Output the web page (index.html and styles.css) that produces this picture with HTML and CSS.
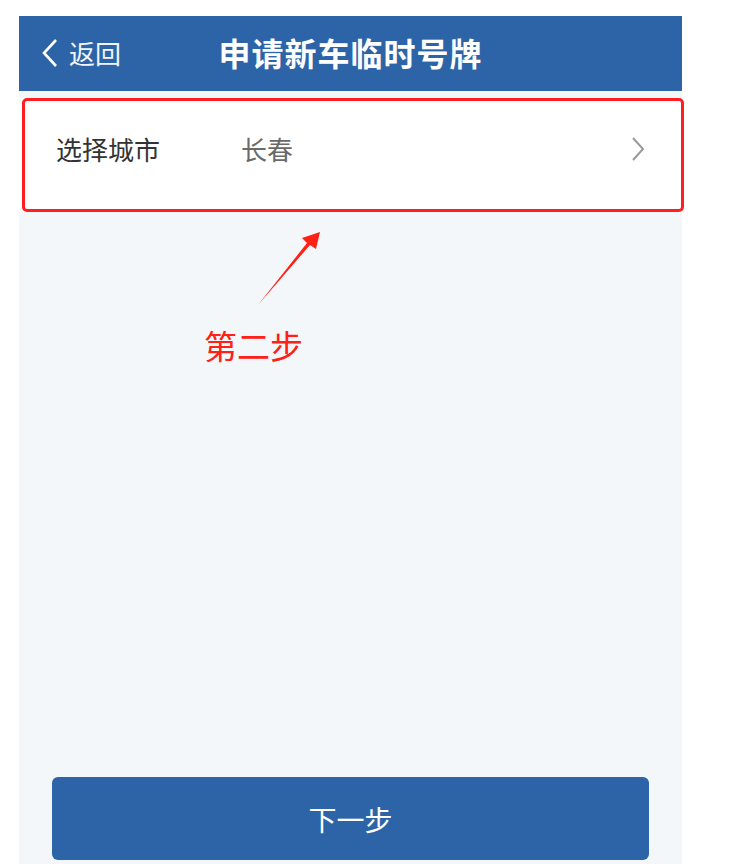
FILE: index.html
```html
<!DOCTYPE html>
<html lang="zh-CN">
<head>
<meta charset="utf-8">
<title>申请新车临时号牌</title>
<link rel="stylesheet" href="styles.css">
</head>
<body>
<div class="page">
  <div class="phone">
    <header class="topbar">
      <div class="back">
        <svg class="back-icon" width="18" height="30" viewBox="0 0 18 30"><polyline points="15,2 3,15 15,28" fill="none" stroke="#fff" stroke-width="2.6" stroke-linejoin="miter"/></svg>
        <span class="back-text">返回</span>
      </div>
      <h1 class="title">申请新车临时号牌</h1>
    </header>
    <div class="row">
      <span class="row-label">选择城市</span>
      <span class="row-value">长春</span>
      <svg class="row-arrow" width="16" height="26" viewBox="0 0 16 26"><polyline points="3,2 13,13 3,24" fill="none" stroke="#9a9a9a" stroke-width="2"/></svg>
    </div>
    <div class="spacer"></div>
    <button class="next">下一步</button>
    <svg class="note-arrow" width="663" height="400" viewBox="0 0 663 400"><polygon points="239,289 288,227 283,222 301,216 297,233 291,229" fill="#ff2016"/></svg>
    <div class="note-text">第二步</div>
  </div>
  <div class="side"></div>
</div>
</body>
</html>
```
FILE: styles.css
```css
* { box-sizing: border-box; }
html, body { margin: 0; padding: 0; background: #ffffff; }
body { font-family: "Noto Sans CJK SC", "Noto Sans", sans-serif; width: 729px; height: 867px; overflow: hidden; }
.page { display: flex; height: 867px; }
.phone {
  position: relative;
  margin: 16px 0 0 19px;
  width: 663px;
  height: 848px;
  background: #f4f7f9;
  display: flex;
  flex-direction: column;
}
.side { flex: 1; }
.topbar {
  height: 75px;
  background: #2d64a7;
  display: flex;
  align-items: center;
  position: relative;
  flex-shrink: 0;
  padding-bottom: 2px;
}
.back {
  display: flex;
  align-items: center;
  padding-left: 22px;
  gap: 10px;
  color: #fff;
}
.back-icon { display: block; }
.back-text { font-size: 26px; line-height: 1; color: #f2f5fa; }
.title {
  position: absolute;
  left: 0; right: 0; top: 0; bottom: 3px;
  margin: 0;
  display: flex;
  align-items: center;
  justify-content: center;
  font-size: 32px;
  font-weight: 700;
  color: #ffffff;
  letter-spacing: 1px;
  pointer-events: none;
}
.row {
  position: relative;
  margin-top: 7px;
  height: 114px;
  background: #ffffff;
  display: flex;
  align-items: center;
  padding-left: 37px;
  padding-bottom: 12px;
  flex-shrink: 0;
}
.row::after {
  content: "";
  position: absolute;
  left: 3px; right: -2px; top: 0; bottom: 0;
  border: 3px solid #ff1f1f;
  border-radius: 5px;
}
.row-label { font-size: 26px; color: #333; width: 185px; line-height: 1; }
.row-value { font-size: 26px; color: #6a6a6a; line-height: 1; }
.row-arrow { position: absolute; right: 36px; top: 38px; }
.spacer { flex: 1; }
.next {
  margin: 0 33px 4px 33px;
  height: 83px;
  border: none;
  border-radius: 6px;
  background: #2d64a7;
  color: #ffffff;
  font-family: "Noto Sans CJK SC", "Noto Sans", sans-serif;
  font-size: 28px;
  flex-shrink: 0;
}
.note-arrow { position: absolute; left: 0; top: 0; pointer-events: none; }
.note-text {
  position: absolute;
  left: 185px;
  top: 313px;
  font-size: 33px;
  line-height: 1;
  color: #ff2016;
}
```
